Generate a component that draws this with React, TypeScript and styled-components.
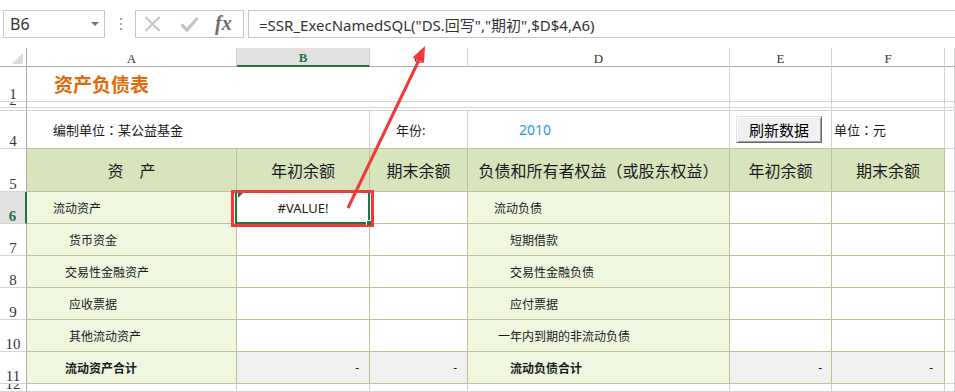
import styled, { createGlobalStyle } from "styled-components";

const GRID = "#d4d4d4";
const TAN = "#c4bd97";
const XL_GREEN = "#217346";
const HEAD_LINE = "#ababab";

type Tone = "plain" | "head" | "label" | "value" | "total";

const tones: Record<Tone, { bg: string; line: string }> = {
  plain: { bg: "#ffffff", line: GRID },
  head: { bg: "#d8e4bc", line: TAN },
  label: { bg: "#eff7df", line: TAN },
  value: { bg: "#ffffff", line: TAN },
  total: { bg: "#f0f0f0", line: TAN },
};

const GlobalStyle = createGlobalStyle`
  * { box-sizing: border-box; }
  html, body { margin: 0; padding: 0; background: #fff; }
  body {
    font-family: "Noto Sans", "Noto Sans CJK SC", sans-serif;
    color: #1a1a1a;
    overflow: hidden;
  }
`;

const Page = styled.div`
  position: relative;
  width: 955px;
  height: 392px;
  overflow: hidden;
  background: #fff;
`;

const FormulaBar = styled.div`
  display: flex;
  align-items: center;
  height: 48px;
  padding: 10px 0 10px 3px;
`;

const NameBox = styled.div`
  width: 102px;
  height: 28px;
  border: 1px solid #c6c6c6;
  display: flex;
  align-items: center;
  justify-content: space-between;
  padding: 0 5px 0 6px;
`;

const NameText = styled.span`
  font-size: 16px;
  color: #333;
`;

const DropArrow = styled.span`
  width: 0;
  height: 0;
  border-left: 4px solid transparent;
  border-right: 4px solid transparent;
  border-top: 4px solid #707070;
`;

const Grip = styled.div`
  display: flex;
  flex-direction: column;
  gap: 3px;
  margin: 0 13px 0 15px;
`;

const GripDot = styled.span`
  width: 2px;
  height: 2px;
  background: #a6a6a6;
`;

const FxBox = styled.div`
  width: 109px;
  height: 28px;
  border: 1px solid #c6c6c6;
  display: flex;
  align-items: center;
  padding-left: 8px;
`;

const FxIcon = styled.span<{ $gap: number }>`
  display: flex;
  margin-right: ${(p) => p.$gap}px;
`;

const FxText = styled.span`
  font-family: "Liberation Serif", serif;
  font-style: italic;
  font-weight: bold;
  font-size: 20px;
  color: #6d6d6d;
  line-height: 1;
  margin-top: -2px;
`;

const FormulaInput = styled.div`
  flex: 1;
  height: 28px;
  margin-left: 4px;
  border: 1px solid #c6c6c6;
  border-right: none;
  display: flex;
  align-items: center;
  padding-left: 10px;
  font-size: 15px;
  color: #333;
  white-space: nowrap;
`;

const Sheet = styled.div`
  display: grid;
  grid-template-columns: 27px 210px 133px 98px 262px 102px 113px 1fr;
  grid-template-rows: 19px 35px 6px 3px 38px 43px repeat(6, 32px) 1fr;
  height: 344px;
`;

const Corner = styled.div`
  border-right: 1px solid ${HEAD_LINE};
  border-bottom: 1px solid ${HEAD_LINE};
  display: flex;
  align-items: flex-end;
  justify-content: flex-end;
  padding: 0 3px 2px 0;
`;

const CornerMark = styled.span`
  width: 0;
  height: 0;
  border-left: 11px solid transparent;
  border-bottom: 11px solid #dadada;
`;

const ColHead = styled.div<{ $active?: boolean }>`
  display: flex;
  align-items: center;
  justify-content: center;
  padding-top: 3px;
  font-family: "Liberation Serif", serif;
  font-size: 13px;
  color: ${(p) => (p.$active ? XL_GREEN : "#333")};
  font-weight: ${(p) => (p.$active ? "bold" : "normal")};
  background: ${(p) => (p.$active ? "#e1e1e1" : "#fff")};
  border-right: 1px solid ${GRID};
  border-bottom: ${(p) => (p.$active ? `2px solid ${XL_GREEN}` : `1px solid ${HEAD_LINE}`)};
`;

const RowHead = styled.div<{ $active?: boolean }>`
  display: flex;
  align-items: flex-end;
  justify-content: center;
  overflow: hidden;
  line-height: 0.95;
  font-family: "Liberation Serif", serif;
  font-size: 15px;
  color: ${(p) => (p.$active ? XL_GREEN : "#333")};
  font-weight: ${(p) => (p.$active ? "bold" : "normal")};
  background: ${(p) => (p.$active ? "#e1e1e1" : "#fff")};
  border-right: ${(p) => (p.$active ? `2px solid ${XL_GREEN}` : `1px solid ${HEAD_LINE}`)};
  border-bottom: 1px solid ${GRID};
`;

const Cell = styled.div<{
  $span?: number;
  $tone?: Tone;
  $under?: string;
  $align?: "left" | "center" | "right";
  $indent?: number;
  $pad?: number;
  $bold?: boolean;
  $size?: number;
  $color?: string;
}>`
  grid-column: span ${(p) => p.$span ?? 1};
  display: flex;
  align-items: center;
  justify-content: ${(p) =>
    p.$align === "right" ? "flex-end" : p.$align === "center" ? "center" : "flex-start"};
  padding: 0 ${(p) => p.$pad ?? 0}px 0 ${(p) => p.$indent ?? 0}px;
  background: ${(p) => tones[p.$tone ?? "plain"].bg};
  border-right: 1px solid ${(p) => tones[p.$tone ?? "plain"].line};
  border-bottom: 1px solid ${(p) => p.$under ?? tones[p.$tone ?? "plain"].line};
  white-space: nowrap;
  overflow: hidden;
  font-size: ${(p) => p.$size ?? 12}px;
  font-weight: ${(p) => (p.$bold ? "bold" : "normal")};
  color: ${(p) => p.$color ?? "#1a1a1a"};
`;

// full-width punctuation sits centred in its box, as in the sheet's font
const Punct = styled.span`
  font-family: "Noto Sans CJK TC", "Noto Sans CJK SC", sans-serif;
`;

const SelectedCell = styled(Cell)`
  position: relative;
  overflow: visible;
  &::before {
    content: "";
    position: absolute;
    left: -2px;
    top: -1px;
    right: -1px;
    bottom: -1px;
    border: 2px solid ${XL_GREEN};
    z-index: 2;
  }
  &::after {
    content: "";
    position: absolute;
    left: -6px;
    top: -2px;
    right: -5px;
    bottom: -4px;
    border: 3px solid #f03a3a;
    z-index: 3;
  }
`;

const FillHandle = styled.span`
  position: absolute;
  right: -2px;
  bottom: -2px;
  width: 5px;
  height: 5px;
  background: ${XL_GREEN};
  border-left: 1px solid #fff;
  border-top: 1px solid #fff;
  z-index: 4;
`;

const ErrorMark = styled.span`
  position: absolute;
  left: 1px;
  top: 1px;
  width: 0;
  height: 0;
  border-top: 5px solid ${XL_GREEN};
  border-right: 5px solid transparent;
`;

const Title = styled.span`
  font-size: 19px;
  font-weight: bold;
  color: #e26b0a;
`;

const RefreshButton = styled.button`
  width: 86px;
  height: 27px;
  padding: 0;
  font-family: "Noto Sans CJK SC", sans-serif;
  font-size: 15px;
  color: #000;
  background: #f0f0f0;
  border: 1px solid;
  border-color: #e3e3e3 #646464 #646464 #e3e3e3;
  box-shadow: inset 1px 1px #fff, inset -1px -1px #a0a0a0;
`;

const Overlay = styled.svg`
  position: absolute;
  left: 0;
  top: 0;
  pointer-events: none;
  z-index: 10;
`;

type BodyRow = {
  n: number;
  asset: string;
  ai: number;
  liab: string;
  li: number;
  total?: boolean;
};

const bodyRows: BodyRow[] = [
  { n: 7, asset: "货币资金", ai: 42, liab: "短期借款", li: 42 },
  { n: 8, asset: "交易性金融资产", ai: 38, liab: "交易性金融负债", li: 42 },
  { n: 9, asset: "应收票据", ai: 42, liab: "应付票据", li: 42 },
  { n: 10, asset: "其他流动资产", ai: 42, liab: "一年内到期的非流动负债", li: 30 },
  { n: 11, asset: "流动资产合计", ai: 38, liab: "流动负债合计", li: 42, total: true },
];

const letters = ["A", "B", "C", "D", "E", "F", ""];

export default function App() {
  return (
    <>
      <GlobalStyle />
      <Page>
        <FormulaBar>
          <NameBox>
            <NameText>B6</NameText>
            <DropArrow />
          </NameBox>
          <Grip>
            <GripDot />
            <GripDot />
            <GripDot />
          </Grip>
          <FxBox>
            <FxIcon $gap={19}>
              <svg width="17" height="16" viewBox="0 0 17 16">
                <path d="M1.5 1 L15.5 15 M15.5 1 L1.5 15" stroke="#c4c4c4" strokeWidth="2" fill="none" />
              </svg>
            </FxIcon>
            <FxIcon $gap={16}>
              <svg width="19" height="16" viewBox="0 0 19 16">
                <path d="M1.5 8.5 L7 14 L17.5 2" stroke="#c4c4c4" strokeWidth="3.2" fill="none" />
              </svg>
            </FxIcon>
            <FxText>fx</FxText>
          </FxBox>
          <FormulaInput>=SSR_ExecNamedSQL("DS.回写","期初",$D$4,A6)</FormulaInput>
        </FormulaBar>

        <Sheet>
          <Corner>
            <CornerMark />
          </Corner>
          {letters.map((c, i) => (
            <ColHead key={i} $active={c === "B"}>
              {c}
            </ColHead>
          ))}

          <RowHead>1</RowHead>
          <Cell $span={4} $indent={27}>
            <Title>资产负债表</Title>
          </Cell>
          <Cell />
          <Cell />
          <Cell />

          <RowHead>2</RowHead>
          <Cell $span={4} />
          <Cell />
          <Cell />
          <Cell />

          <RowHead />
          <Cell $span={4} />
          <Cell />
          <Cell />
          <Cell />

          <RowHead>4</RowHead>
          <Cell $span={2} $indent={26} $size={13} $under={TAN}>
            编制单位<Punct>：</Punct>某公益基金
          </Cell>
          <Cell $indent={26} $size={13} $under={TAN}>
            年份:
          </Cell>
          <Cell $indent={51} $size={14} $color="#1a9fe0" $under={TAN}>
            2010
          </Cell>
          <Cell $indent={6} $under={TAN}>
            <RefreshButton>刷新数据</RefreshButton>
          </Cell>
          <Cell $indent={2} $size={13} $under={TAN}>
            单位<Punct>：</Punct>元
          </Cell>
          <Cell />

          <RowHead>5</RowHead>
          <Cell $tone="head" $align="center" $size={16}>资　产</Cell>
          <Cell $tone="head" $align="center" $size={16}>年初余额</Cell>
          <Cell $tone="head" $align="center" $size={16}>期末余额</Cell>
          <Cell $tone="head" $align="center" $size={16}>
            负债和所有者权益<Punct>（</Punct>或股东权益<Punct>）</Punct>
          </Cell>
          <Cell $tone="head" $align="center" $size={16}>年初余额</Cell>
          <Cell $tone="head" $align="center" $size={16}>期末余额</Cell>
          <Cell />

          <RowHead $active>6</RowHead>
          <Cell $tone="label" $indent={26}>流动资产</Cell>
          <SelectedCell $tone="value" $align="center" $size={13}>
            <ErrorMark />
            #VALUE!
            <FillHandle />
          </SelectedCell>
          <Cell $tone="value" />
          <Cell $tone="label" $indent={26}>流动负债</Cell>
          <Cell $tone="value" />
          <Cell $tone="value" />
          <Cell />

          {bodyRows.map((r) => {
            const v: Tone = r.total ? "total" : "value";
            const dash = r.total ? "-" : "";
            return [
              <RowHead key={`h${r.n}`}>{r.n}</RowHead>,
              <Cell key={`a${r.n}`} $tone="label" $indent={r.ai} $bold={r.total}>
                {r.asset}
              </Cell>,
              <Cell key={`b${r.n}`} $tone={v} $align="right" $pad={10}>
                {dash}
              </Cell>,
              <Cell key={`c${r.n}`} $tone={v} $align="right" $pad={10}>
                {dash}
              </Cell>,
              <Cell key={`d${r.n}`} $tone="label" $indent={r.li} $bold={r.total}>
                {r.liab}
              </Cell>,
              <Cell key={`e${r.n}`} $tone={v} $align="right" $pad={9}>
                {dash}
              </Cell>,
              <Cell key={`f${r.n}`} $tone={v} $align="right" $pad={11}>
                {dash}
              </Cell>,
              <Cell key={`g${r.n}`} />,
            ];
          })}

          <RowHead>12</RowHead>
          <Cell />
          <Cell />
          <Cell />
          <Cell />
          <Cell />
          <Cell />
          <Cell />
        </Sheet>

        <Overlay width="955" height="392" viewBox="0 0 955 392">
          <line x1="348" y1="208" x2="419" y2="60" stroke="#f03a3a" strokeWidth="3" />
          <polygon points="425,46 412.5,57.5 424,63" fill="#f03a3a" />
        </Overlay>
      </Page>
    </>
  );
}
